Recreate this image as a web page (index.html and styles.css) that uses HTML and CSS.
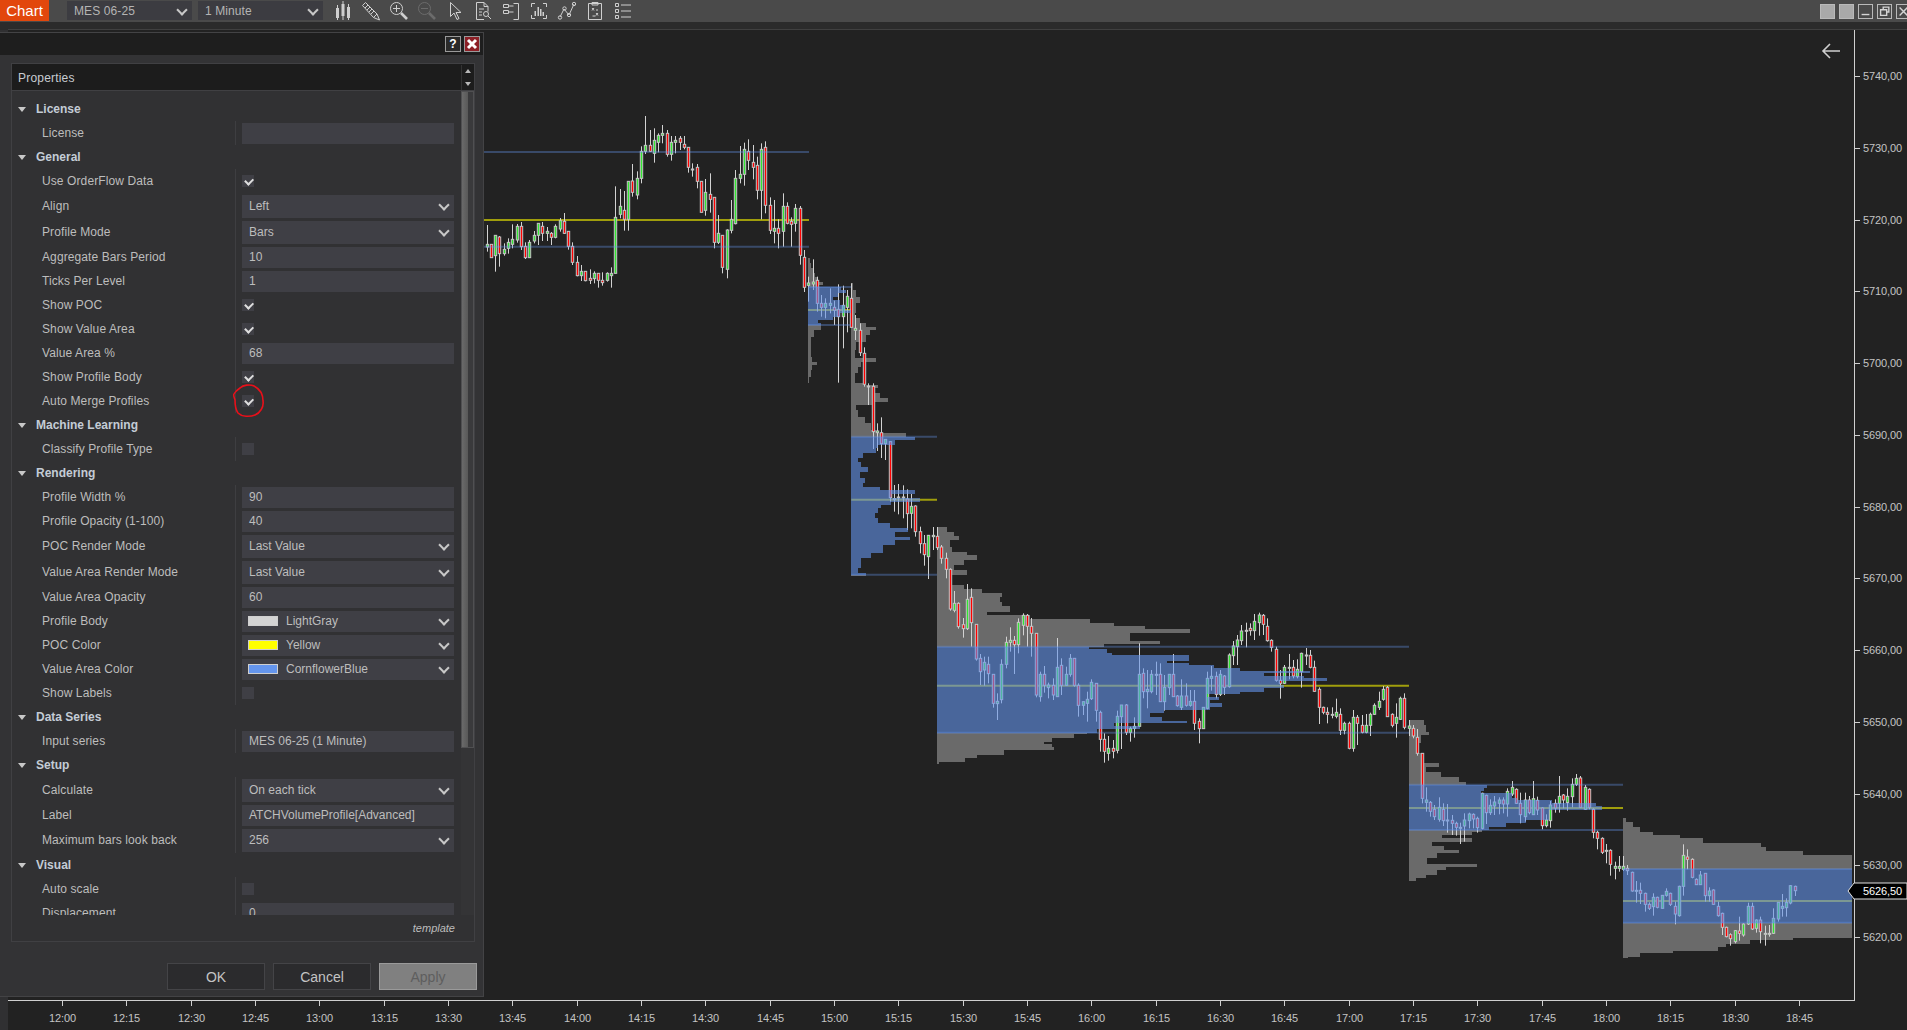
FILE: index.html
```html
<!DOCTYPE html>
<html lang="en">
<head>
    <meta charset="UTF-8">
    <title>Chart - MES 06-25</title>
    <link rel="stylesheet" href="styles.css">
</head>
<body>
    <div class="topbar">
        <div class="chart-tab">Chart</div>
        <div class="top-select">MES 06-25</div>
        <div class="top-select">1 Minute</div>
        <div class="tools">
            <svg class="tool" viewBox="0 0 20 20"><path class="solid" d="M3 7h3v10H3zM8.500 3h3v12h-3zM14 6h3v11h-3z"/><path d="M4.500 4v15M10 0v19M15.500 3v16"/></svg>
            <svg class="tool" viewBox="0 0 20 20"><path d="M1.500 4.500 4.500 1.500 16 13l2.500 6-6-2.500zM4 7l3-3M6 9l3-3M8 11l3-3M10 13l3-3M12.500 16.500 16 13"/></svg>
            <svg class="tool" viewBox="0 0 20 20"><circle cx="7.500" cy="7.500" r="6"/><path d="M7.500 4v7M4 7.500h7"/><path class="thick" d="m12 12 6 6"/></svg>
            <svg class="tool dim" viewBox="0 0 20 20"><circle cx="7.500" cy="7.500" r="6"/><path d="M4 7.500h7"/><path class="thick" d="m12 12 6 6"/></svg>
            <svg class="tool" viewBox="0 0 20 20"><path d="M5.500 1.500v14l3.500-3.500 3 6.500 2-1-3-6h5z"/></svg>
            <svg class="tool" viewBox="0 0 20 20"><path d="M11 18.500H3.500v-17H11l4 4v5M11 1.500v4h4M6 8h5M6 11h3M6 14h3"/><circle cx="13" cy="13" r="2.500"/><path d="m15 15 3 3"/></svg>
            <svg class="tool" viewBox="0 0 20 20"><path d="M2.500 3.500h5v3h-5zM2.500 9.500h5v3h-5zM7.500 5h5M7.500 11h5M12.500 2.500h5v16h-5"/></svg>
            <svg class="tool" viewBox="0 0 20 20"><path d="M6 2.500H2.500V6M14 2.500h3.500V6M6 17.500H2.500V14M14 17.500h3.500V14"/><path class="solid" d="M5.500 10h1.500v5H5.500zM8.500 6h1.500v9H8.500zM11 8h1.500v7H11zM13.500 11h1.500v4h-1.500z"/></svg>
            <svg class="tool" viewBox="0 0 20 20"><path d="m3 16 4-8 5 6 5-11"/><circle cx="3" cy="16.500" r="1.700"/><circle cx="7.500" cy="7.500" r="1.700"/><circle cx="12" cy="14" r="1.700"/><circle cx="17" cy="3" r="1.700"/></svg>
            <svg class="tool" viewBox="0 0 20 20"><path d="M3.500 2.500h13v16h-13zM7 1.500h6v2.500H7zM7 7l2 2.500M9 7l-2 2.500M11 12l2 2.500M13 12l-2 2.500M7.500 15h3M11 9h2"/></svg>
            <svg class="tool" viewBox="0 0 20 20"><path d="M2.500 2.500h3v3h-3zM2.500 8.500h3v3h-3zM2.500 14.500h3v3h-3zM8 4h10M8 10h10M8 16h10"/></svg>
        </div>
        <div class="win-buttons">
            <span class="win-btn blank"></span>
            <span class="win-btn blank"></span>
            <span class="win-btn"><svg viewBox="0 0 15 15"><path d="M3 11h9"/></svg></span>
            <span class="win-btn"><svg viewBox="0 0 15 15"><path d="M6 5V2.500h6.500V8H10M3 5.500h7v6.500H3z"/></svg></span>
            <span class="win-btn"><svg viewBox="0 0 15 15"><path d="m3 3 9 9M12 3l-9 9"/></svg></span>
        </div>
    </div>
    <div class="tab-strip"><div class="tab-line"></div></div>

    <div class="workspace">
        <svg id="chart" class="chart" viewBox="0 30 1907 1000" width="1907" height="1000"></svg>

        <div class="dialog">
            <div class="dialog-title">
                <span class="title-btn help">?</span>
                <span class="title-btn close"><svg viewBox="0 0 14 14"><path d="m3 3 8 8M11 3l-8 8"/></svg></span>
            </div>

            <div class="panel">
                <div class="panel-head">
                    <span>Properties</span>
                    <div class="head-arrows"><i class="arrow-up"></i><i class="arrow-down"></i></div>
                </div>
                <div class="panel-body">
                    <div class="prop-list">
                        <div class="group"><i class="tri"></i>License</div>
                        <div class="row"><div class="name">License</div><div class="input"></div></div>

                        <div class="group"><i class="tri"></i>General</div>
                        <div class="row"><div class="name">Use OrderFlow Data</div><div class="check on"></div></div>
                        <div class="row combo-row"><div class="name">Align</div><div class="input combo">Left</div></div>
                        <div class="row combo-row"><div class="name">Profile Mode</div><div class="input combo">Bars</div></div>
                        <div class="row"><div class="name">Aggregate Bars Period</div><div class="input">10</div></div>
                        <div class="row"><div class="name">Ticks Per Level</div><div class="input">1</div></div>
                        <div class="row"><div class="name">Show POC</div><div class="check on"></div></div>
                        <div class="row"><div class="name">Show Value Area</div><div class="check on"></div></div>
                        <div class="row"><div class="name">Value Area %</div><div class="input">68</div></div>
                        <div class="row"><div class="name">Show Profile Body</div><div class="check on"></div></div>
                        <div class="row marked">
                            <div class="name">Auto Merge Profiles</div><div class="check on"></div>
                            <svg class="scribble" viewBox="0 0 34 34" width="34" height="34"><path d="M8 4C11 1 18 0 22 2c6 3 9 9 9 15 1 6-3 12-8 14-5 2-13 2-17-2-3-4-3-9-3-13-1-3-2-5-1-6 1-2 3-4 6-6z"/></svg>
                        </div>

                        <div class="group"><i class="tri"></i>Machine Learning</div>
                        <div class="row"><div class="name">Classify Profile Type</div><div class="check"></div></div>

                        <div class="group"><i class="tri"></i>Rendering</div>
                        <div class="row"><div class="name">Profile Width %</div><div class="input">90</div></div>
                        <div class="row"><div class="name">Profile Opacity (1-100)</div><div class="input">40</div></div>
                        <div class="row combo-row"><div class="name">POC Render Mode</div><div class="input combo">Last Value</div></div>
                        <div class="row combo-row"><div class="name">Value Area Render Mode</div><div class="input combo">Last Value</div></div>
                        <div class="row"><div class="name">Value Area Opacity</div><div class="input">60</div></div>
                        <div class="row"><div class="name">Profile Body</div><div class="input combo slim"><i class="swatch light-gray"></i>LightGray</div></div>
                        <div class="row"><div class="name">POC Color</div><div class="input combo slim"><i class="swatch yellow"></i>Yellow</div></div>
                        <div class="row"><div class="name">Value Area Color</div><div class="input combo slim"><i class="swatch cornflower"></i>CornflowerBlue</div></div>
                        <div class="row"><div class="name">Show Labels</div><div class="check"></div></div>

                        <div class="group"><i class="tri"></i>Data Series</div>
                        <div class="row"><div class="name">Input series</div><div class="input">MES 06-25 (1 Minute)</div></div>

                        <div class="group"><i class="tri"></i>Setup</div>
                        <div class="row combo-row"><div class="name">Calculate</div><div class="input combo">On each tick</div></div>
                        <div class="row"><div class="name">Label</div><div class="input">ATCHVolumeProfile[Advanced]</div></div>
                        <div class="row combo-row"><div class="name">Maximum bars look back</div><div class="input combo">256</div></div>

                        <div class="group"><i class="tri"></i>Visual</div>
                        <div class="row"><div class="name">Auto scale</div><div class="check"></div></div>
                        <div class="row"><div class="name">Displacement</div><div class="input">0</div></div>
                    </div>
                    <div class="scrollbar"><div class="thumb"></div></div>
                </div>
                <div class="panel-foot">template</div>
            </div>

            <div class="dialog-buttons">
                <div class="btn">OK</div>
                <div class="btn">Cancel</div>
                <div class="btn disabled">Apply</div>
            </div>
        </div>
    </div>

    <script src="chart.js"></script>
</body>
</html>
```

FILE: styles.css
```css
* {
    box-sizing: border-box;
}

body {
    margin: 0;
    width: 1907px;
    height: 1030px;
    overflow: hidden;
    display: flex;
    flex-direction: column;
    background: #222222;
    color: #bdbdbd;
    font-family: "Liberation Sans", Arial, sans-serif;
    font-size: 12px;
    letter-spacing: 0.1px;
}

/* top toolbar */
.topbar {
    height: 22px;
    flex: none;
    display: flex;
    align-items: flex-start;
    overflow: hidden;
    background: #4a4a4a;
}

.chart-tab {
    width: 49px;
    height: 21px;
    margin-right: 18px;
    background: #e2470c;
    color: #fff;
    font-size: 15px;
    line-height: 21px;
    letter-spacing: 0;
    text-align: center;
}

.top-select {
    position: relative;
    width: 125px;
    height: 19px;
    margin: 1px 6px 0 0;
    padding-left: 7px;
    background: #3c3c41;
    color: #b4b4b4;
    line-height: 20px;
}

.top-select::after,
.combo::after {
    content: "";
    position: absolute;
    right: 6px;
    top: 50%;
    width: 6px;
    height: 6px;
    margin-top: -5px;
    border-right: 2px solid #c8c8c8;
    border-bottom: 2px solid #c8c8c8;
    transform: rotate(45deg);
}

.tools {
    display: flex;
    gap: 8px;
    margin: 1px 0 0 4px;
}

.tool {
    width: 20px;
    height: 20px;
    fill: none;
    stroke: #cfcfcf;
    stroke-width: 1;
}

.tool .solid {
    fill: #cfcfcf;
    stroke: none;
}

.tool .thick {
    stroke-width: 2.6;
}

.tool.dim {
    stroke: #6b6b6b;
}

.win-buttons {
    display: flex;
    flex: none;
    gap: 4px;
    margin: 4px -4px 0 auto;
}

.win-btn {
    width: 15px;
    height: 15px;
    border: 1px solid #b9b9b9;
}

.win-btn svg {
    display: block;
    width: 13px;
    height: 13px;
    fill: none;
    stroke: #d4d4d4;
    stroke-width: 1.6;
}

.win-btn.blank {
    background: #a9a9a9;
}

.tab-strip {
    height: 8px;
    flex: none;
    padding: 7px 0 0 8px;
    background: #2b2b2b;
}

.tab-line {
    height: 1px;
    background: #404040;
}

/* chart area */
.workspace {
    position: relative;
    flex: 1;
    border-left: 8px solid #303032;
}

.chart {
    position: absolute;
    left: -8px;
    top: 0;
    display: block;
}

.chart text {
    fill: #c4c4c4;
    font-size: 11px;
    letter-spacing: -0.1px;
}

/* properties dialog */
.dialog {
    position: absolute;
    left: -8px;
    top: 2px;
    width: 484px;
    height: 965px;
    display: flex;
    flex-direction: column;
    background: #333335;
    border: 1px solid #434345;
    border-left: 0;
}

.dialog-title {
    height: 22px;
    flex: none;
    display: flex;
    justify-content: flex-end;
    gap: 3px;
    padding: 3px 3px 0 0;
    background: #1e1e1e;
}

.title-btn {
    width: 16px;
    height: 16px;
    color: #fff;
    font-size: 12px;
    font-weight: bold;
    line-height: 15px;
    text-align: center;
    letter-spacing: 0;
    border: 1px solid #9a9a9a;
}

.title-btn svg {
    display: block;
    fill: none;
    stroke: #fff;
    stroke-width: 3;
}

.title-btn.help {
    background: #2a2a2a;
}

.title-btn.close {
    background: #8c1f26;
}

.panel {
    height: 879px;
    flex: none;
    display: flex;
    flex-direction: column;
    margin: 8px 8px 0 11px;
    border: 1px solid #404043;
    background: #313133;
}

.panel-head {
    height: 27px;
    flex: none;
    display: flex;
    align-items: center;
    justify-content: space-between;
    padding: 1px 0 0 6px;
    background: #1c1c1c;
    border-bottom: 1px solid #404043;
    color: #c8ccd2;
    letter-spacing: 0.2px;
}

.head-arrows {
    width: 13px;
    height: 100%;
    display: flex;
    flex-direction: column;
    justify-content: center;
    align-items: center;
    gap: 9px;
    border-left: 1px solid #333;
}

.arrow-up,
.arrow-down {
    border-left: 3px solid transparent;
    border-right: 3px solid transparent;
}

.arrow-up {
    border-bottom: 4px solid #b8b8b8;
}

.arrow-down {
    border-top: 4px solid #b8b8b8;
}

.panel-body {
    height: 824px;
    flex: none;
    display: flex;
}

.prop-list {
    flex: 1;
    overflow: hidden;
    padding-top: 6px;
}

.group {
    height: 24px;
    display: flex;
    align-items: center;
    color: #c4ccd6;
    font-weight: bold;
    letter-spacing: 0;
}

.tri {
    width: 0;
    height: 0;
    margin: 0 10px 0 6px;
    border-left: 4.5px solid transparent;
    border-right: 4.5px solid transparent;
    border-top: 5px solid #c8c8c8;
}

.row {
    position: relative;
    height: 24px;
    display: flex;
    align-items: center;
}

.combo-row {
    height: 26px;
}

.name {
    width: 224px;
    height: 100%;
    flex: none;
    padding-left: 30px;
    line-height: 24px;
    border-right: 1px solid #3e3e41;
}

.combo-row .name {
    line-height: 26px;
}

.input {
    position: relative;
    width: 212px;
    height: 21px;
    margin-left: 6px;
    padding-left: 7px;
    display: flex;
    align-items: center;
    background: #3f3f45;
    color: #bdbdbd;
    letter-spacing: 0;
}

.combo {
    height: 23px;
}

.combo.slim {
    height: 21px;
    padding-left: 6px;
}

.swatch {
    width: 30px;
    height: 10px;
    margin-right: 8px;
    border: 1px solid #cfcfcf;
}

.light-gray {
    background: #d3d3d3;
}

.yellow {
    background: #ffff00;
}

.cornflower {
    background: #6495ed;
}

.check {
    position: relative;
    width: 12px;
    height: 12px;
    margin-left: 6px;
    background: #3f3f45;
}

.check.on::after {
    content: "";
    position: absolute;
    left: 3px;
    top: 2.5px;
    width: 5.5px;
    height: 3.5px;
    border-left: 2px solid #dedede;
    border-bottom: 2px solid #dedede;
    transform: rotate(-45deg);
}

.scribble {
    position: absolute;
    left: 220px;
    top: -5px;
    fill: none;
    stroke: #e8101a;
    stroke-width: 1.6;
}

.scrollbar {
    width: 13px;
    flex: none;
    background: #343436;
}

.thumb {
    height: 657px;
    border: 1px solid #505052;
    background: linear-gradient(90deg, #6a6a6a 0, #5a5a5a 50%, #3a3a3c 50%);
}

.panel-foot {
    flex: 1;
    padding: 7px 19px 0 0;
    text-align: right;
    font-size: 11px;
    font-style: italic;
    letter-spacing: 0;
}

.dialog-buttons {
    display: flex;
    justify-content: flex-end;
    gap: 8px;
    margin-top: 21px;
    padding-right: 6px;
}

.btn {
    width: 98px;
    height: 27px;
    background: #2b2b2d;
    border: 1px solid #444447;
    color: #c4c4c4;
    font-size: 14px;
    line-height: 26px;
    letter-spacing: 0;
    text-align: center;
}

.btn.disabled {
    background: #808080;
    border-color: #9a9a9a;
    color: #5e5e5e;
}
```

FILE: chart.js
```js
// minute candles, y values read off in 3x crops: [up, top, bottom, high, low]
const candleSets = [
    { oy: 100, rows: [
        [1,433,441,375,455],[0,433,473,433,473],[1,406,467,406,515],[0,411,461,408,500],[1,448,461,430,467],
        [1,427,445,415,461],[1,418,433,373,445],[1,379,420,372,428],[0,379,440,366,450],[0,439,473,427,477],
        [1,427,473,420,473],[1,406,423,393,430],[1,370,406,370,435],[0,379,400,366,423],[1,394,400,381,423],
        [0,400,412,396,435],[1,379,412,373,415],[1,362,387,354,395],[0,364,400,339,402],[0,394,439,394,449],
        [0,439,487,427,495],[0,487,527,468,529],[1,514,527,495,543],[0,514,542,514,544],[0,535,541,508,552],
        [1,520,536,514,550],[0,520,541,520,563],[0,541,548,517,557],[1,520,541,517,545],[1,520,527,502,563],
        [1,352,520,259,520],[1,319,343,267,355],[0,331,358,273,392],[1,244,358,244,392],[0,243,277,192,290],
        [1,235,285,214,298],[1,154,235,139,250],[1,136,154,48,162],[0,136,154,90,156],[1,121,160,85,188],
        [1,106,127,100,157],[1,100,106,75,130],[0,100,163,90,170],[1,127,163,108,182],[1,121,127,108,160],
        [0,115,127,108,150],[0,133,142,108,148],[0,142,202,142,218],[0,207,209,190,230],[0,202,244,192,265],
        [0,244,337,244,337],[1,277,331,237,347],[0,283,298,220,338],[0,292,427,292,445],[1,400,427,345,432],
        [0,406,502,405,520],[1,390,508,388,535],[1,358,391,300,400],[1,235,371,210,373],[1,223,235,138,250],
        [1,148,223,128,257],[0,154,181,118,210],[0,187,202,135,238],[0,196,271,170,298],[1,148,271,130,358],
        [0,142,316,124,340],[0,316,391,292,402],[1,385,394,300,430],[0,385,400,358,445],[1,319,394,280,440],
        [0,319,370,307,373],[0,364,373,352,440],[1,325,370,312,395],[0,325,466,318,494],[0,472,562,450,576],
        [1,549,556,530,605],[1,546,552,478,570],[0,541,610,530,635],[0,610,622,585,650],[1,610,622,595,655],
        [1,610,616,565,640],[0,622,631,602,675],[0,628,650,553,848],[1,616,650,557,745],[1,589,622,570,697]
    ] },
    { oy: 270, rows: [
        [0,85,172,40,172],[1,175,181,135,210],[0,181,248,160,258],[0,250,343,232,350],[1,348,350,340,405],
        [0,349,485,340,537],[1,483,488,460,543],[0,488,521,442,564],[1,508,521,508,570],[0,515,683,515,695],
        [1,686,689,645,725],[1,681,684,642,733],[1,681,684,646,745],[0,687,731,658,780],[1,709,730,672,775],
        [0,708,785,706,800],[0,785,821,770,850],[0,821,854,795,887],[1,796,860,795,927],[1,796,800,771,840],
        [0,799,833,771,840],[0,831,865,825,881],[0,865,898,848,925],[0,898,1017,895,1022],[1,1000,1021,963,1027],
        [0,1000,1070,997,1076],[0,1064,1076,1044,1103],[1,988,1076,942,1080],[0,982,1058,955,1130],[0,1063,1167,1063,1172],
        [0,1165,1205,1152,1245],[1,1177,1200,1160,1247],[0,1183,1211,1160,1240],[0,1213,1300,1213,1313],[1,1294,1301,1270,1350],
        [1,1183,1289,1168,1300],[1,1117,1183,1100,1195],[1,1111,1117,1072,1145],[0,1111,1124,1098,1212],[1,1057,1124,1045,1150],
        [1,1036,1066,1030,1096],[0,1036,1069,1032,1130],[0,1069,1090,1044,1160],[0,1090,1275,1090,1282],[1,1213,1280,1205,1295],
        [0,1213,1246,1188,1268],[1,1245,1253,1238,1285],[0,1246,1275,1225,1290],[1,1192,1280,1104,1280],[0,1186,1246,1165,1275],
        [1,1213,1246,1190,1247],[1,1165,1213,1152,1220],[0,1165,1246,1165,1250],[0,1246,1306,1240,1340],[1,1295,1306,1295,1335],
        [1,1288,1300,1265,1355],[1,1237,1286,1228,1290],[0,1240,1321,1240,1355],[0,1327,1408,1322,1445],[0,1408,1444,1390,1478],
        [1,1435,1450,1398,1472],[0,1435,1444,1410,1465],[1,1339,1441,1322,1450],[1,1305,1340,1305,1437],[0,1305,1387,1302,1395],
        [1,1375,1387,1370,1415],[1,1369,1375,1342,1403],[1,1213,1369,1120,1370],[0,1210,1265,1195,1285],[1,1258,1265,1200,1315],
        [1,1213,1265,1200,1270],[1,1213,1215,1175,1275],[0,1213,1295,1180,1295],[1,1252,1295,1215,1322],[1,1213,1253,1213,1275],
        [0,1213,1280,1152,1280],[0,1278,1307,1275,1310],[1,1278,1312,1228,1320],[0,1278,1306,1240,1310],[1,1294,1306,1260,1310],
        [0,1294,1360,1260,1380],[0,1354,1376,1345,1420],[1,1312,1376,1312,1376],[1,1225,1315,1205,1318],[1,1219,1225,1188,1262],
        [0,1219,1273,1205,1285]
    ] },
    { oy: 590, rows: [
        [1,253,313,240,318],[0,258,292,255,315],[1,195,290,190,293],[1,168,197,153,225],[1,150,170,135,225],
        [1,123,152,105,165],[1,121,124,98,172],[0,115,122,100,137],[1,94,122,72,150],[1,75,98,68,137],
        [0,76,103,72,135],[0,109,152,85,155],[0,151,172,148,185],[0,178,271,170,275],[0,271,280,240,326],
        [1,232,280,225,282],[1,232,234,192,268],[0,232,258,210,265],[1,238,260,208,265],[1,190,245,188,293],
        [1,195,197,174,225],[0,196,232,180,235],[0,232,304,212,306],[0,298,352,292,402],[0,352,367,350,373],
        [0,367,373,352,400],[1,373,375,352,385],[1,367,379,326,385],[0,373,421,355,435],[1,400,421,395,433],
        [0,400,475,395,478],[1,382,475,360,485],[0,382,400,375,465],[0,406,427,375,430],[1,406,427,372,430],
        [1,373,406,368,438],[1,346,373,340,375],[1,334,352,305,360],[1,298,328,288,332],[0,292,380,288,380],
        [0,373,406,370,412],[1,382,400,340,443],[1,325,388,320,390],[0,325,412,310,418],[1,408,415,390,438],
        [0,415,438,405,445],[0,442,490,417,497]
    ] },
    { oy: 720, rows: [
        [0,100,235,100,250],[1,240,247,202,275],[0,247,274,243,290],[0,268,290,255,300],[1,262,298,232,305],
        [0,268,302,250,318],[1,300,302,252,338],[0,301,310,285,345],[0,310,322,305,347],[1,322,324,308,372],
        [1,300,318,280,365],[1,282,302,278,325],[0,283,297,280,325],[0,295,323,290,338],[1,220,325,218,328],
        [0,226,278,224,312],[1,256,278,238,285],[1,246,258,228,285],[1,240,250,232,283],[0,240,252,232,280],
        [1,214,252,205,290],[1,202,222,183,228],[0,208,250,205,252],[0,250,284,218,310],[1,240,290,218,305],
        [0,240,278,228,283],[1,236,284,183,285],[0,241,270,230,285],[0,264,317,262,328],[1,300,317,283,322],
        [1,255,302,243,323],[0,250,264,238,278],[1,229,250,168,278],[0,225,240,222,265],[1,229,248,205,272],
        [1,193,230,175,262],[1,175,193,162,198],[0,174,262,168,262],[1,202,268,195,270],[0,208,262,205,268],
        [0,268,337,265,355],[0,337,355,332,388],[0,355,397,352,402],[1,391,393,372,430],[0,391,433,388,467],
        [1,439,445,425,478],[1,439,445,408,455],[1,439,448,408,453],[0,445,452,435,465],[0,457,513,455,515],
        [1,511,513,483,548],[0,511,520,488,552],[0,520,553,518,575],[0,553,565,547,570],[1,532,560,520,587],
        [0,532,562,530,565],[1,526,565,525,565],[1,514,526,505,530],[0,520,553,518,558],[0,559,582,545,613],
        [1,499,587,497,590],[1,406,499,373,527],[0,411,418,388,448],[0,418,472,415,475],[0,478,494,475,495],
        [1,465,494,453,495],[0,460,527,460,545],[1,513,527,502,545],[0,510,553,508,555],[0,559,587,545,590],
        [0,580,622,578,645],[0,622,650,620,652],[0,644,656,640,677],[1,632,665,630,670],[0,633,640,590,662],
        [1,612,645,610,650],[1,559,612,548,615],[0,559,627,548,630],[1,600,625,598,638],[0,600,635,590,670],
        [1,640,642,617,677],[1,640,642,615,650],[1,595,640,565,642],[1,547,597,547,605],[1,559,565,522,590],
        [1,547,563,535,590],[1,497,549,495,553],[0,499,512,497,528]
    ] }
];

// volume profiles: steps are [y, width] in crop pixels, each step runs down to the next one
const steps = (oy, rows) => rows.map(r => [oy + r[0] / 3, r[1] / 3]);

const profiles = [
    { x0: 484, x1: 809, vah: 152, poc: 220, val: 246.7, rows: [] },
    { x0: 808, x1: 851, vah: 287, poc: 310, val: 325, rows: steps(100, [
        [475,5],[490,10],[505,15],[520,20],[530,30],[545,45],[555,30],[562,100],[570,115],[580,90],[590,75],[600,95],
        [615,110],[630,130],[640,95],[650,75],[660,30],[668,40],[680,40],[690,18],[710,10],[740,8],[770,12],[785,28],
        [795,12],[810,8],[830,4],[850,0]]) },
    { x0: 851.3, x1: 937, vah: 436.7, poc: 499.7, val: 574.7, rows: steps(270, [
        [40,5],[60,15],[80,25],[100,15],[130,10],[145,25],[160,45],[170,75],[180,55],[195,45],[215,15],[240,10],[265,75],
        [275,30],[290,20],[310,10],[340,35],[345,80],[355,65],[370,85],[385,110],[395,65],[405,15],[420,20],[440,40],
        [460,60],[480,75],[490,165],[500,190],[510,130],[525,80],[535,75],[550,35],[565,20],[575,30],[590,50],[605,25],
        [625,40],[640,35],[650,85],[660,190],[672,120],[685,205],[695,120],[705,90],[715,80],[730,70],[745,80],[760,115],
        [775,170],[785,130],[800,175],[810,130],[825,95],[838,95],[850,60],[865,30],[880,30],[895,20],[910,45],[917,0]]) },
    { x0: 937, x1: 1409, vah: 646.7, poc: 685.7, val: 732.7, rows: steps(270, [
        [772,30],[785,50],[797,65],[810,40],[830,45],[845,90],[855,120],[870,80],[885,50],[900,90],[915,40],[930,40],
        [945,80],[958,135],[968,195],[980,190],[995,195],[1008,218],[1025,150],[1035,280],[1048,460],[1060,530],[1068,625],
        [1078,760],[1090,580],[1100,580],[1112,670],[1122,500]]).concat(steps(590, [
        [170,455],[178,510],[188,525],[195,755],[205,755],[212,690],[218,755],[225,830],[235,910],[243,1120],[250,980],
        [258,1100],[265,1170],[272,1030],[285,1040],[295,980],[305,910],[312,810],[320,845],[330,820],[340,855],[350,820],
        [360,680],[368,640],[380,675],[393,750],[400,530],[408,610],[418,480],[428,450],[432,410],[445,345],[455,320],
        [462,345],[470,350],[480,200],[495,120],[505,85],[515,5],[522,0]])) },
    { x0: 1409, x1: 1623, vah: 784.7, poc: 808, val: 830, rows: steps(720, [
        [0,45],[15,50],[35,60],[45,35],[70,25],[100,40],[130,90],[140,50],[155,95],[170,150],[185,170],[194,235],[203,225],
        [212,215],[220,310],[235,325],[240,430],[250,560],[258,580],[270,420],[285,420],[300,350],[310,290],[320,240],
        [330,220],[335,190],[345,100],[355,190],[365,70],[378,105],[390,150],[400,85],[415,55],[433,205],[440,110],
        [450,85],[465,50],[475,20],[483,0]]) },
    { x0: 1623, x1: 1852, vah: 869, poc: 901, val: 922.7, rows: steps(720, [
        [295,10],[305,30],[320,50],[335,90],[345,170],[355,240],[368,415],[380,430],[392,540],[405,687],[612,687],
        [655,510],[660,380],[672,310],[680,285],[692,150],[700,50],[712,15],[715,0]]) }
];

const svg = document.getElementById('chart');
const NS = 'http://www.w3.org/2000/svg';

function add(name, attrs, text) {
    const el = document.createElementNS(NS, name);
    for (const key in attrs) el.setAttribute(key, attrs[key]);
    if (text) el.textContent = text;
    svg.appendChild(el);
    return el;
}

function line(x1, y1, x2, y2, stroke, width, opacity) {
    add('line', { x1, y1, x2, y2, stroke, 'stroke-width': width || 1, 'stroke-opacity': opacity || 1 });
}

// path for the steps of a profile that fall between two y values
function profilePath(p, from, to) {
    let d = '';
    p.rows.forEach((r, i) => {
        const next = p.rows[i + 1];
        if (!next) return;
        const top = Math.max(r[0], from);
        const bottom = Math.min(next[0], to);
        if (bottom > top && r[1] > 0) {
            d += `M${p.x0} ${top}h${r[1]}V${bottom}H${p.x0}Z`;
        }
    });
    return d;
}

// gray body and POC go under the candles
profiles.forEach(p => {
    add('path', { d: profilePath(p, 0, p.vah) + profilePath(p, p.val, 2000), fill: '#6a6a6a', 'shape-rendering': 'crispEdges' });
    line(p.x0, p.poc, p.x1, p.poc, '#a09e0c', 2);
});

let minute = 99;
candleSets.forEach(set => {
    set.rows.forEach(c => {
        const x = Math.round(62 + minute * 4.2889);
        const y = v => set.oy + v / 3;
        line(x + 0.5, y(c[3]), x + 0.5, y(c[4]), '#d2d2d2');
        add('rect', {
            x: x - 0.7, y: y(c[1]), width: 2.4, height: Math.max(y(c[2]) - y(c[1]), 1),
            fill: c[0] ? '#32e632' : '#ff0000', stroke: '#c4c4c4', 'stroke-width': 1
        });
        minute++;
    });
});

// value area sits on top with its alpha, so the candles show through
profiles.forEach(p => {
    add('path', { d: profilePath(p, p.vah, p.val), fill: '#6495ed', 'fill-opacity': 0.6, 'shape-rendering': 'crispEdges' });
    line(p.x0, p.vah, p.x1, p.vah, '#6495ed', 2, 0.35);
    line(p.x0, p.val, p.x1, p.val, '#6495ed', 2, 0.35);
});

// axes
line(1854.5, 30, 1854.5, 1000, '#cfcfcf');
line(8, 1000.5, 1855, 1000.5, '#cfcfcf');

for (let p = 5620; p <= 5740; p += 10) {
    const y = Math.round(76 + (5740 - p) * 7.175);
    line(1855, y + 0.5, 1860, y + 0.5, '#cfcfcf');
    add('text', { x: 1863, y: y + 4 }, p + ',00');
}

for (let i = 0; i < 28; i++) {
    const x = Math.round(62 + i * 64.333);
    const m = 720 + i * 15;
    const label = Math.floor(m / 60) + ':' + String(m % 60).padStart(2, '0');
    line(x + 0.5, 1001, x + 0.5, 1006, '#cfcfcf');
    add('text', { x: x + 0.5, y: 1022, 'text-anchor': 'middle' }, label);
}

// last price marker and the collapse arrow
add('path', { d: 'M1848 891l6-8h53v16h-53z', fill: '#000', stroke: '#e0e0e0' });
add('text', { x: 1863, y: 895, style: 'fill:#fff' }, '5626,50');
add('path', { d: 'M1840 51h-16M1830 44l-7 7 7 7', fill: 'none', stroke: '#cfcfcf', 'stroke-width': 1.6 });
```
